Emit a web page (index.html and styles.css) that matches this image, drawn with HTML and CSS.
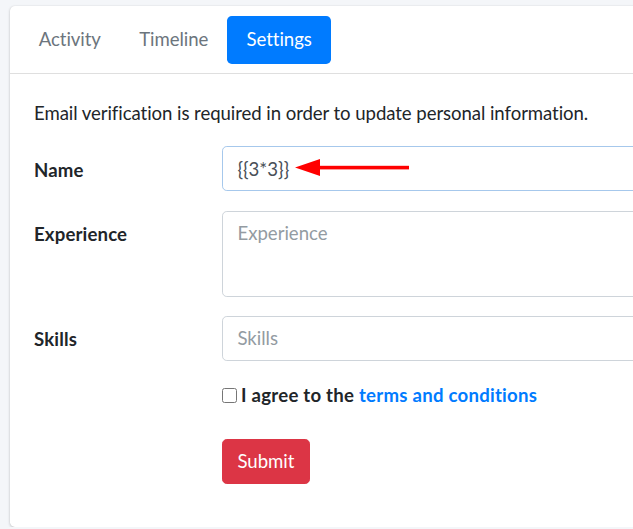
FILE: index.html
```html
<!DOCTYPE html>
<html lang="en">
<head>
<meta charset="utf-8">
<title>Settings</title>
<link rel="stylesheet" href="styles.css">
</head>
<body>
<div class="page">
  <div class="card">
    <div class="card-header">
      <ul class="nav">
        <li><a class="nav-link" href="#activity">Activity</a></li>
        <li><a class="nav-link" href="#timeline">Timeline</a></li>
        <li><a class="nav-link active" href="#settings">Settings</a></li>
      </ul>
    </div>
    <div class="card-body">
      <p class="note">Email verification is required in order to update personal information.</p>
      <form class="form">
        <div class="form-row">
          <label class="col-label" for="name">Name</label>
          <div class="col-field">
            <div class="field-wrap">
              <input class="form-control focused" id="name" type="text" value="{{3*3}}">
              <svg class="arrow" width="114" height="19" viewBox="0 0 114 19" aria-hidden="true">
                <polygon points="0,9.5 25,1 25,18" fill="#ff0000"/>
                <rect x="22" y="7.8" width="92" height="3.6" fill="#ff0000"/>
              </svg>
            </div>
          </div>
        </div>
        <div class="form-row">
          <label class="col-label" for="experience">Experience</label>
          <div class="col-field">
            <textarea class="form-control textarea" id="experience" placeholder="Experience"></textarea>
          </div>
        </div>
        <div class="form-row">
          <label class="col-label" for="skills">Skills</label>
          <div class="col-field">
            <input class="form-control" id="skills" type="text" placeholder="Skills">
          </div>
        </div>
        <div class="form-row offset">
          <label class="check-label"><input class="check" type="checkbox"><span class="check-text">I agree to the <a class="terms" href="#terms">terms and conditions</a></span></label>
        </div>
        <div class="form-row offset">
          <button class="btn-submit" type="button">Submit</button>
        </div>
      </form>
    </div>
  </div>
</div>
</body>
</html>
```

FILE: styles.css
```css
html, body {
  margin: 0;
  overflow: hidden;
}
body {
  background: #f4f6f9;
  font-family: Lato, "Liberation Sans", sans-serif;
  font-size: 18.6px;
  letter-spacing: -0.07px;
  line-height: 28.8px;
  color: #212529;
}
.page {
  padding: 6px 0 0 10px;
}
.card {
  width: 1150px;
  background: #fff;
  border-radius: 4.8px;
  box-shadow: 0 0 1px rgba(0,0,0,.125), 0 1px 3px rgba(0,0,0,.2);
}
.card-header {
  padding: 9.6px;
  border-bottom: 1px solid rgba(0,0,0,.125);
}
.nav {
  display: flex;
  list-style: none;
  margin: 0;
  padding: 0;
}
.nav-link {
  display: block;
  padding: 9.6px 19.2px;
  color: #6c757d;
  text-decoration: none;
  border-radius: 4.8px;
}
.nav-link.active {
  background: #007bff;
  color: #fff;
}
.card-body {
  padding: 25px 24px 24px;
}
.note {
  margin: 0 0 18.2px;
}
.form-row {
  display: flex;
  margin-bottom: 19.2px;
}
.col-label {
  flex: 0 0 188px;
  padding-top: 9.4px;
  font-weight: 700;
  letter-spacing: 0.15px;
}
.col-field {
  flex: 1;
}
.field-wrap {
  position: relative;
}
.form-control {
  display: block;
  width: 100%;
  box-sizing: border-box;
  height: 45.2px;
  padding: 7.2px 14.4px;
  font: inherit;
  color: #495057;
  background: #fff;
  border: 1px solid #ced4da;
  border-radius: 4.8px;
  outline: none;
}
.form-control::placeholder {
  color: #939ba2;
}
.form-control.focused {
  border-color: #a6c8ec;
}
.textarea {
  height: 86px;
  resize: none;
}
.arrow {
  position: absolute;
  left: 73px;
  top: 12px;
}
.offset {
  padding-left: 188px;
}
.check-label {
  display: flex;
  align-items: center;
  gap: 4px;
  font-weight: 700;
  letter-spacing: 0.25px;
  margin-top: 1px;
  margin-bottom: 9.6px;
}
.check {
  appearance: none;
  flex: 0 0 15px;
  width: 15px;
  height: 15px;
  margin: 1px 0 0;
  box-sizing: border-box;
  border: 1.5px solid #767676;
  border-radius: 2.5px;
  background: #fff;
}
.terms {
  color: #007bff;
  text-decoration: none;
}
.btn-submit {
  font: inherit;
  color: #fff;
  background: #dc3545;
  border: 1px solid #dc3545;
  border-radius: 4.8px;
  padding: 7.2px 14.4px;
}
```
